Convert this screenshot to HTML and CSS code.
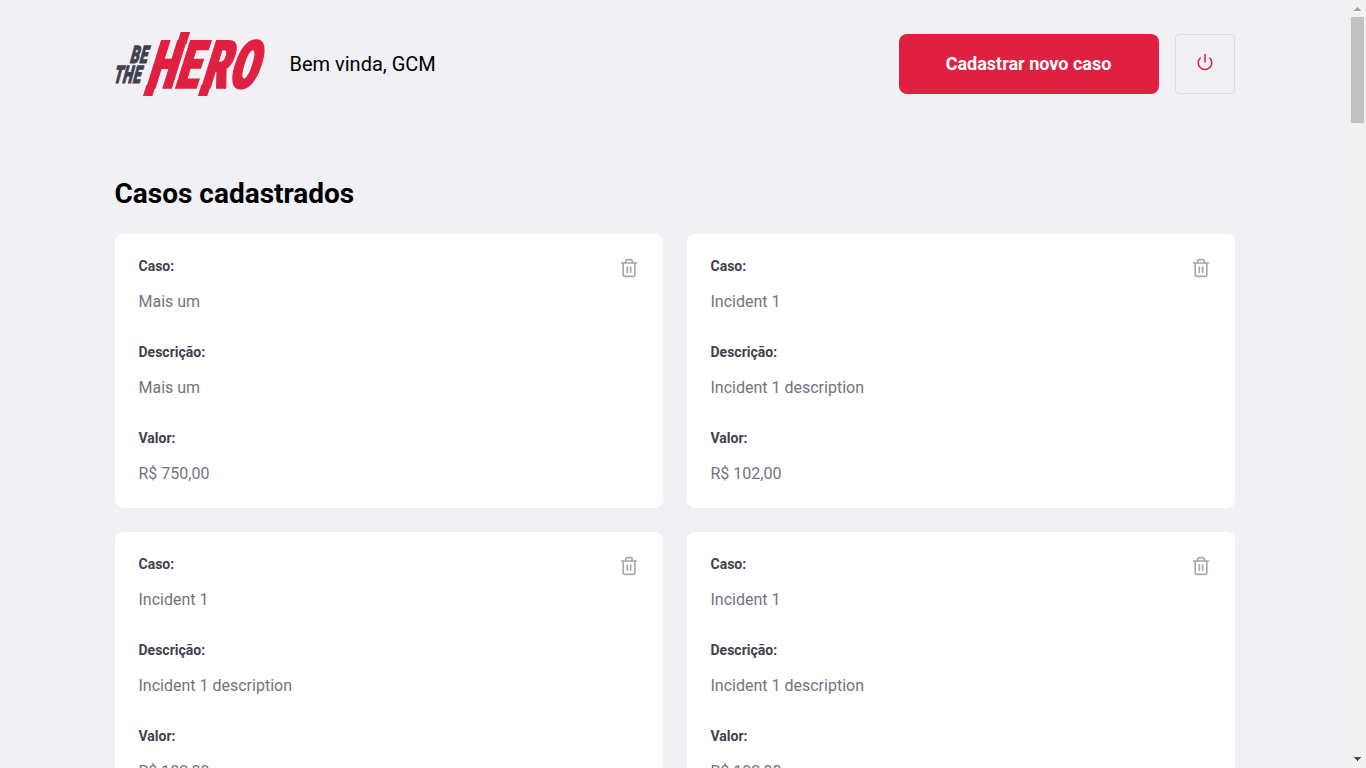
FILE: index.html
```html
<!DOCTYPE html>
<html lang="pt-BR">
<head>
<meta charset="utf-8">
<title>Be The Hero</title>
<link rel="stylesheet" href="styles.css">
</head>
<body>
<svg class="sprite" width="0" height="0" aria-hidden="true">
  <symbol id="trash" viewBox="0 0 24 24">
    <polyline points="3 6 5 6 21 6"/>
    <path d="M19 6v14a2 2 0 0 1-2 2H7a2 2 0 0 1-2-2V6m3 0V4a2 2 0 0 1 2-2h4a2 2 0 0 1 2 2v2"/>
    <line x1="10" y1="11" x2="10" y2="17"/>
    <line x1="14" y1="11" x2="14" y2="17"/>
  </symbol>
</svg>
<div class="viewport">
  <main class="profile">
    <header class="header">
      <svg class="logo" width="151" height="64" viewBox="0 0 151 64" role="img" aria-label="Be The Hero">
        <filter id="widen" x="-5%" y="-5%" width="110%" height="110%" color-interpolation-filters="sRGB">
          <feMorphology operator="dilate" radius="1 0"/>
        </filter>
        <g class="logo-small">
          <text transform="translate(14.8 30.5) skewX(-15) scale(.57 1)" x="-1 15.6">BE</text>
          <text transform="translate(-1.8 51.2) skewX(-15) scale(.57 1)" x="-1 14.8 33">THE</text>
        </g>
        <g class="logo-big" filter="url(#widen)">
          <g transform="translate(32.3 56) skewX(-17.3)">
            <text transform="scale(.58 1)" x="-3 46.7 91.7 138.6">HERO</text>
            <rect x="-.8" y="-3" width="7.4" height="11"/>
            <rect x="17" y="-56" width="7.4" height="12"/>
            <rect x="54.1" y="-3" width="7.4" height="11"/>
          </g>
        </g>
      </svg>
      <span class="welcome">Bem vinda, GCM</span>
      <a class="button" href="#">Cadastrar novo caso</a>
      <button class="logout" type="button" aria-label="Sair">
        <svg width="18" height="18" viewBox="0 0 24 24"><path d="M18.36 6.64a9 9 0 1 1-12.73 0"/><line x1="12" y1="2" x2="12" y2="12"/></svg>
      </button>
    </header>
    <h1 class="title">Casos cadastrados</h1>
    <ul class="cases">
      <li class="case">
        <strong>Caso:</strong><p>Mais um</p>
        <strong>Descrição:</strong><p>Mais um</p>
        <strong>Valor:</strong><p>R$ 750,00</p>
        <button class="delete" type="button" aria-label="Excluir"><svg width="20" height="20"><use href="#trash"/></svg></button>
      </li>
      <li class="case">
        <strong>Caso:</strong><p>Incident 1</p>
        <strong>Descrição:</strong><p>Incident 1 description</p>
        <strong>Valor:</strong><p>R$ 102,00</p>
        <button class="delete" type="button" aria-label="Excluir"><svg width="20" height="20"><use href="#trash"/></svg></button>
      </li>
      <li class="case">
        <strong>Caso:</strong><p>Incident 1</p>
        <strong>Descrição:</strong><p>Incident 1 description</p>
        <strong>Valor:</strong><p>R$ 102,00</p>
        <button class="delete" type="button" aria-label="Excluir"><svg width="20" height="20"><use href="#trash"/></svg></button>
      </li>
      <li class="case">
        <strong>Caso:</strong><p>Incident 1</p>
        <strong>Descrição:</strong><p>Incident 1 description</p>
        <strong>Valor:</strong><p>R$ 102,00</p>
        <button class="delete" type="button" aria-label="Excluir"><svg width="20" height="20"><use href="#trash"/></svg></button>
      </li>
    </ul>
  </main>
  <div class="scrollbar" aria-hidden="true">
    <svg class="arrow" width="17" height="17" shape-rendering="crispEdges"><path fill="#a3a3a3" d="M8 7h1v1h1v1h1v1h1v1H5v-1h1V9h1V8h1z"/></svg>
    <div class="thumb"></div>
    <svg class="arrow arrow-down" width="17" height="17" shape-rendering="crispEdges"><path fill="#505050" d="M5 6h7v1h-1v1h-1v1H9v1H8V9H7V8H6V7H5z"/></svg>
  </div>
</div>
</body>
</html>
```
FILE: styles.css
```css
* {
  margin: 0;
  padding: 0;
  box-sizing: border-box;
}
body {
  font: 400 14px Roboto, sans-serif;
  background: #f0f0f5;
  overflow: hidden;
}
button {
  background: transparent;
  border: 0;
  cursor: pointer;
}
.sprite {
  position: absolute;
}
.viewport {
  display: flex;
  height: 100vh;
  overflow: hidden;
}
.profile {
  flex: 1;
  padding: 32px 114.5px 0;
}
.header {
  display: flex;
  align-items: center;
  height: 64px;
}
.logo {
  flex: none;
  overflow: visible;
}
.logo-small {
  font: 900 24px Roboto, sans-serif;
  fill: #41414d;
  stroke: #41414d;
  stroke-width: 1.2px;
}
.logo-big {
  fill: #e02041;
}
.logo-big text {
  font: 900 66.5px Roboto, sans-serif;
  stroke: #e02041;
  stroke-width: 1.6px;
}
.welcome {
  margin-left: 24px;
  font-size: 20px;
  line-height: 24px;
}
.button {
  width: 260px;
  height: 60px;
  margin-left: auto;
  border-radius: 8px;
  background: #e02041;
  color: #fff;
  font-size: 18px;
  font-weight: 700;
  line-height: 60px;
  text-align: center;
  text-decoration: none;
}
.logout {
  width: 60px;
  height: 60px;
  margin-left: 16px;
  padding-bottom: 2px;
  border: 1px solid #dcdce6;
  border-radius: 4px;
}
.logout svg,
.delete svg {
  fill: none;
  stroke-width: 2;
  stroke-linecap: round;
  stroke-linejoin: round;
}
.logout svg {
  stroke: #e02041;
}
.title {
  margin: 80px 0 22px;
  font-size: 28px;
  font-weight: 700;
  line-height: 36px;
}
.cases {
  display: grid;
  grid-template-columns: repeat(2, 1fr);
  gap: 24px;
  list-style: none;
}
.case {
  position: relative;
  padding: 24px;
  border-radius: 8px;
  background: #fff;
}
.case strong {
  display: block;
  margin-bottom: 16px;
  color: #41414d;
  line-height: 17px;
}
.case p {
  color: #737380;
  font-size: 16px;
  line-height: 21px;
}
.case p + strong {
  margin-top: 32px;
}
.delete {
  position: absolute;
  top: 24px;
  right: 24px;
}
.delete svg {
  display: block;
  stroke: #a8a8b3;
}
.scrollbar {
  display: flex;
  flex-direction: column;
  width: 17px;
  background: #f1f1f1;
}
.arrow {
  flex: none;
}
.arrow-down {
  margin-top: auto;
}
.thumb {
  width: 13px;
  height: 106px;
  margin-left: 2px;
  background: #c1c1c1;
}
```
